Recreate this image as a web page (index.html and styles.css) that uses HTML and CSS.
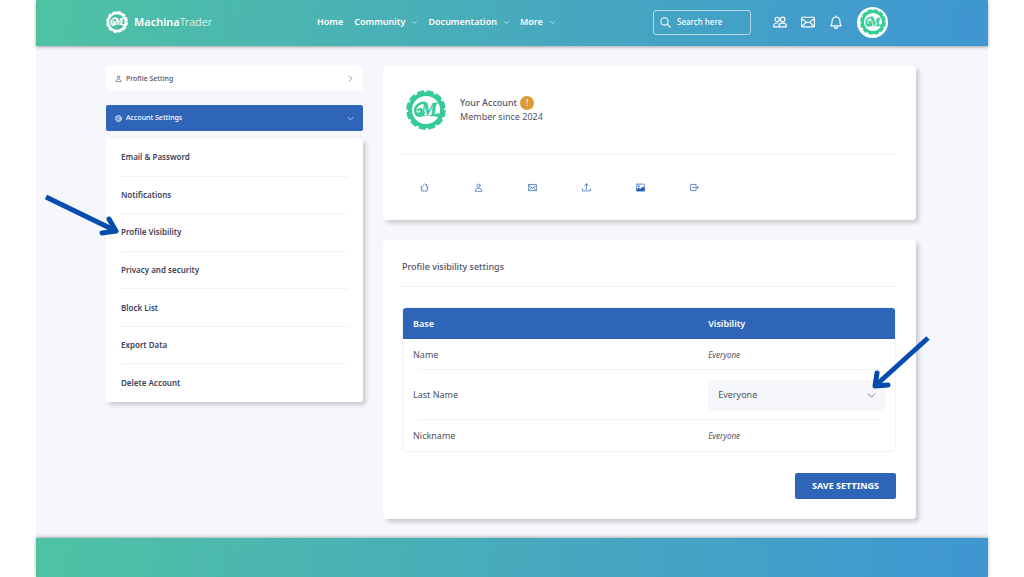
FILE: index.html
```html
<!DOCTYPE html>
<html lang="en">
<head>
<meta charset="utf-8">
<meta name="viewport" content="width=device-width, initial-scale=1">
<title>MachinaTrader – Profile visibility</title>
<link rel="stylesheet" href="styles.css">
</head>
<body>
<svg class="sprite" aria-hidden="true">
  <symbol id="gear-logo" viewBox="0 0 100 100">
    <circle cx="50" cy="50" r="40" fill="none" stroke="currentColor" stroke-width="10"/>
    <circle cx="50" cy="50" r="45" fill="none" stroke="currentColor" stroke-width="9" stroke-dasharray="17.5 6.06"/>
    <path d="M47 32C34 30 22 41 23 53c1 9 14 9 16 0 1-5-6-7-8-3M25 60c6 8 16 5 20-3M74 62c2 4 5 3 7-1" fill="none" stroke="currentColor" stroke-width="6" stroke-linecap="round"/>
    <text x="37" y="64" font-family="Liberation Serif, serif" font-size="46" font-weight="700" font-style="italic" fill="currentColor" stroke="currentColor" stroke-width="1">M</text>
  </symbol>
  <symbol id="chevron" viewBox="0 0 16 16"><path d="M2 5l6 6 6-6"/></symbol>
  <symbol id="people" viewBox="0 0 16 16"><circle cx="4.800" cy="5" r="2.400"/><circle cx="11" cy="5" r="2.600"/><path d="M6.600 13.500c0-5.600 8.800-5.600 8.800 0zM6.600 13.500H.6c0-3.500 2.300-4.700 5-4.300"/></symbol>
  <symbol id="mail" viewBox="0 0 16 16"><rect x=".6" y="2.600" width="14.800" height="11" rx="1.400"/><path d="M.8 4.500L8 9l7.200-4.500M1 13l5.300-5M15 13L9.700 8"/></symbol>
  <symbol id="bell" viewBox="0 0 16 16"><path d="M8 1v1M2 12.500c1.300-1.300 1.500-3 1.500-5C3.500 4.500 5.300 2.300 8 2.300s4.500 2.200 4.500 5.200c0 2 .2 3.700 1.500 5zM6.300 14c.4 1.700 3 1.700 3.400 0"/></symbol>
  <symbol id="search" viewBox="0 0 16 16"><circle cx="6.500" cy="6.500" r="5.300"/><path d="M10.500 10.500L15 15"/></symbol>
  <symbol id="person" viewBox="0 0 16 16"><circle cx="8" cy="4.800" r="2.900"/><path d="M2 14c0-6.200 12-6.200 12 0z"/></symbol>
  <symbol id="cog" viewBox="0 0 16 16"><circle cx="8" cy="8" r="2.600"/><circle cx="8" cy="8" r="5.800"/><circle cx="8" cy="8" r="7" stroke-dasharray="3.200 2.300"/></symbol>
  <symbol id="house" viewBox="0 0 16 16"><path d="M1.500 8L8 1.700 14.500 8M3 7v7.300h10V7M11.800 5V2.500"/></symbol>
  <symbol id="upload" viewBox="0 0 16 16"><path d="M.8 10v4h14.400v-4M8 11V1.500M4.800 4.600L8 1.400l3.200 3.200"/></symbol>
  <symbol id="image" viewBox="0 0 16 16"><rect x="1" y="2" width="14" height="12" rx="1.500"/><circle cx="4.800" cy="5.600" r="1"/><path d="M1.500 11.500L5 9l3 1.800L11.500 7l3.500 2v5H1.500z" fill="currentColor"/></symbol>
  <symbol id="exit" viewBox="0 0 16 16"><path d="M10.500 5V2.500H1.200v11h9.300V11M5 8h9.500M11.700 5l3 3-3 3"/></symbol>
</svg>

<div class="page">
  <header class="topbar">
    <a class="brand" href="#">
      <svg class="brand-mark"><use href="#gear-logo"/></svg>
      <span class="brand-name"><strong>Machina</strong>Trader</span>
    </a>
    <nav class="nav" aria-label="Main">
      <a href="#">Home</a>
      <a href="#">Community <svg class="icon icon-tiny"><use href="#chevron"/></svg></a>
      <a href="#">Documentation <svg class="icon icon-tiny"><use href="#chevron"/></svg></a>
      <a href="#">More <svg class="icon icon-tiny"><use href="#chevron"/></svg></a>
    </nav>
    <div class="tools">
      <label class="search">
        <svg class="icon icon-search"><use href="#search"/></svg>
        <input type="search" placeholder="Search here" aria-label="Search">
      </label>
      <button class="tool" type="button" aria-label="Friends"><svg class="icon"><use href="#people"/></svg></button>
      <button class="tool" type="button" aria-label="Messages"><svg class="icon"><use href="#mail"/></svg></button>
      <button class="tool" type="button" aria-label="Notifications"><svg class="icon"><use href="#bell"/></svg></button>
      <a class="avatar" href="#" aria-label="Your profile"><svg><use href="#gear-logo"/></svg></a>
    </div>
  </header>

  <main class="content">
    <aside class="sidebar">
      <button class="section" type="button">
        <svg class="icon icon-small"><use href="#person"/></svg>
        <span>Profile Setting</span>
        <svg class="icon icon-small closed"><use href="#chevron"/></svg>
      </button>
      <button class="section section-open" type="button" aria-expanded="true">
        <svg class="icon icon-small"><use href="#cog"/></svg>
        <span>Account Settings</span>
        <svg class="icon icon-small"><use href="#chevron"/></svg>
      </button>
      <ul class="menu">
        <li><a href="#">Email &amp; Password</a></li>
        <li><a href="#">Notifications</a></li>
        <li>
          <a href="#">Profile Visibility</a>
          <svg class="arrow arrow-menu" viewBox="0 0 76 44" aria-hidden="true"><path d="M2 4L72 38"/><path class="head" d="M65 26L72 38 58 40"/></svg>
        </li>
        <li><a href="#">Privacy and security</a></li>
        <li><a href="#">Block List</a></li>
        <li><a href="#">Export Data</a></li>
        <li><a href="#">Delete Account</a></li>
      </ul>
    </aside>

    <div class="main">
      <section class="card">
        <div class="account">
          <svg class="account-logo"><use href="#gear-logo"/></svg>
          <div>
            <h1 class="account-name">Your Account <span class="badge">!</span></h1>
            <p class="account-since">Member since 2024</p>
          </div>
        </div>
        <nav class="shortcuts" aria-label="Account">
          <a href="#" aria-label="Home"><svg class="icon icon-link"><use href="#house"/></svg></a>
          <a href="#" aria-label="Profile"><svg class="icon icon-link"><use href="#person"/></svg></a>
          <a href="#" aria-label="Messages"><svg class="icon icon-link"><use href="#mail"/></svg></a>
          <a href="#" aria-label="Upload"><svg class="icon icon-link"><use href="#upload"/></svg></a>
          <a href="#" aria-label="Images"><svg class="icon icon-link"><use href="#image"/></svg></a>
          <a href="#" aria-label="Log out"><svg class="icon icon-link"><use href="#exit"/></svg></a>
        </nav>
      </section>

      <form class="card">
        <h2 class="card-title">Profile visibility settings</h2>
        <table class="fields">
          <thead><tr><th scope="col">Base</th><th scope="col">Visibility</th></tr></thead>
          <tbody>
            <tr><td>Name</td><td><em>Everyone</em></td></tr>
            <tr class="tall">
              <td><label for="last-name">Last Name</label></td>
              <td>
                <div class="select">
                  <select id="last-name"><option>Everyone</option></select>
                  <svg class="icon select-icon"><use href="#chevron"/></svg>
                  <svg class="arrow arrow-select" viewBox="0 0 64 60" aria-hidden="true"><path d="M61 6L8 54"/><path class="head" d="M10 41L8 54 21 53"/></svg>
                </div>
              </td>
            </tr>
            <tr><td>Nickname</td><td><em>Everyone</em></td></tr>
          </tbody>
        </table>
        <div class="actions"><button class="save" type="submit">SAVE SETTINGS</button></div>
      </form>
    </div>
  </main>
  <footer class="footer"></footer>
</div>
</body>
</html>
```
FILE: styles.css
```css
* { box-sizing: border-box; }

body {
  margin: 0;
  background: #fff;
  color: #515365;
  font: 9px/14px "Noto Sans", "Open Sans", sans-serif;
}

h1, h2, p, ul { margin: 0; padding: 0; }
a { color: inherit; text-decoration: none; }
button, input, select { font: inherit; color: inherit; }
button { border: 0; padding: 0; background: none; }

.sprite { display: none; }

.page {
  display: flex;
  flex-direction: column;
  min-height: 100vh;
  margin: 0 36px;
  background: #f6f7fc;
}

.icon {
  display: block;
  width: 14px;
  height: 14px;
  flex: none;
  fill: none;
  stroke: currentColor;
  stroke-width: 1.3;
  stroke-linecap: round;
  stroke-linejoin: round;
}
.icon-tiny { width: 5px; height: 5px; stroke-width: 2; }
.icon-small { width: 7px; height: 7px; stroke-width: 1.4; }
.icon-search { width: 11px; height: 11px; stroke-width: 1.5; }
.icon-link { width: 9px; height: 9px; stroke-width: 1.3; }

/* Header */
.topbar {
  display: flex;
  align-items: center;
  height: 46px;
  padding: 0 100px 2px 70px;
  background: linear-gradient(100deg, #4fc2a3, #46a8bf 55%, #3f96d2);
  box-shadow: 0 1px 3px rgba(0, 0, 0, .35);
  color: #fff;
}
.brand { display: flex; align-items: center; gap: 6px; width: 211px; }
.brand-mark { width: 22px; height: 22px; }
.brand-name { font-size: 11px; font-weight: 300; }
.brand-name strong { font-weight: 600; }
.nav { display: flex; gap: 11px; font-weight: 600; }
.nav a { display: flex; align-items: center; gap: 7px; }
.tools { display: flex; align-items: center; gap: 14px; margin-left: auto; }
.search {
  display: flex;
  align-items: center;
  gap: 6px;
  width: 98px;
  height: 25px;
  margin-right: 8px;
  padding: 0 6px;
  border: 1px solid rgba(255, 255, 255, .6);
  border-radius: 3px;
}
.search input {
  flex: 1;
  min-width: 0;
  padding: 0;
  border: 0;
  outline: 0;
  background: none;
  font-size: 8px;
  font-weight: 500;
}
.search input::placeholder { color: #fff; opacity: 1; }
.avatar {
  display: grid;
  place-items: center;
  width: 31px;
  height: 31px;
  border-radius: 50%;
  background: #fff;
  color: #35cb97;
}
.avatar svg { width: 26px; height: 26px; }

/* Layout */
.content {
  display: grid;
  grid-template-columns: 257fr 533fr;
  align-items: start;
  gap: 20px;
  flex: 1;
  padding: 20px 72px 19px 70px;
}
.main { display: grid; gap: 20px; }

/* Sidebar */
.section {
  display: flex;
  align-items: center;
  gap: 4px;
  width: 100%;
  height: 25px;
  margin-bottom: 14px;
  padding: 0 9px;
  border-radius: 2px;
  background: #fff;
  font-size: 7px;
  font-weight: 500;
  text-align: left;
}
.section span { flex: 1; }
.section-open {
  height: 26px;
  margin-bottom: 8px;
  background: #2e65b9;
  color: #fff;
}
.closed { transform: rotate(-90deg); }
.menu {
  display: grid;
  grid-auto-rows: 1fr;
  min-height: 263px;
  padding: 0 15px;
  border-radius: 2px;
  background: #fff;
  box-shadow: 3px 3px 4px rgba(0, 0, 0, .18);
  color: #3f4257;
  font-size: 8px;
  font-weight: 600;
  list-style: none;
}
.menu li {
  position: relative;
  display: flex;
  align-items: center;
  border-bottom: 1px solid #f3f3f6;
}
.menu li:last-child { border-bottom: 0; }

/* Cards */
.card {
  padding: 20px 20px 20px 19px;
  border-radius: 4px;
  background: #fff;
  box-shadow: 3px 3px 4px rgba(0, 0, 0, .18);
}
.account {
  display: flex;
  align-items: center;
  gap: 14px;
  padding: 0 0 20px 4px;
  border-bottom: 1px solid #f1f1f5;
}
.account-logo { width: 40px; height: 48px; color: #35cb97; }
.account-name {
  display: flex;
  align-items: center;
  gap: 3px;
  font-size: 9px;
  font-weight: 500;
}
.badge {
  width: 14px;
  height: 14px;
  border-radius: 50%;
  background: #e09a33;
  color: #fff;
  font-size: 8px;
  text-align: center;
}
.shortcuts { display: flex; gap: 10px; padding: 22px 0 3px; color: #2e65b9; }
.shortcuts a {
  display: grid;
  place-items: center;
  width: 44px;
  height: 20px;
}

.card-title {
  padding: 0 0 12px;
  border-bottom: 1px solid #f1f1f5;
  font-size: 9px;
  font-weight: 500;
}
.fields {
  width: 100%;
  margin: 20px 0 21px;
  border: 1px solid #f3f3f6;
  border-radius: 4px;
  border-spacing: 0;
  table-layout: fixed;
}
.fields th, .fields td { height: 31px; padding: 0 10px; text-align: left; }
.fields th:first-child { width: 60%; border-radius: 3px 0 0; }
.fields th:last-child { border-radius: 0 3px 0 0; }
.fields th { background: #2e65b9; color: #fff; font-weight: 600; }
.fields em { font-size: 8px; }
.fields .tall td { height: 50px; }
.fields tbody tr:not(:last-child) {
  background: linear-gradient(#f3f3f6, #f3f3f6) center bottom / calc(100% - 30px) 1px no-repeat;
}
.select { position: relative; }
.select select {
  display: block;
  width: 100%;
  height: 31px;
  padding: 0 10px;
  border: 0;
  border-radius: 3px;
  background: #f6f7fb;
  appearance: none;
}
.select-icon {
  position: absolute;
  top: 11px;
  right: 9px;
  width: 9px;
  height: 9px;
  pointer-events: none;
}
.actions { display: flex; justify-content: flex-end; }
.save {
  width: 101px;
  height: 26px;
  border-radius: 2px;
  background: #2e65b9;
  color: #fff;
  font-weight: 700;
}

/* Guide arrows laid over the interface */
.arrow {
  position: absolute;
  z-index: 1;
  fill: none;
  stroke: #064cae;
  stroke-width: 5;
  pointer-events: none;
}
.arrow .head { stroke-linecap: round; stroke-linejoin: round; }
.arrow-menu { top: -21px; left: -77px; width: 76px; height: 44px; }
.arrow-select { top: -48px; right: -46px; width: 64px; height: 60px; }

.footer {
  height: 39px;
  background: linear-gradient(100deg, #4fc2a3, #46a8bf 55%, #3f96d2);
  box-shadow: 0 -1px 3px rgba(0, 0, 0, .3);
}
```
